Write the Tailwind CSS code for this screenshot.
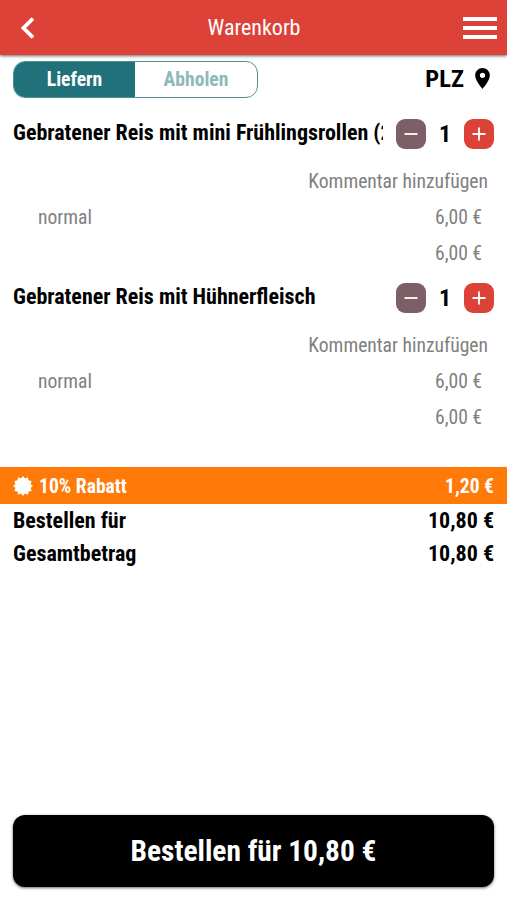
<!DOCTYPE html>
<html lang="de">
<head>
  <meta charset="UTF-8" />
  <meta name="viewport" content="width=device-width, initial-scale=1.0" />
  <title>Warenkorb</title>
  <script src="https://cdn.jsdelivr.net/npm/@tailwindcss/browser@4"></script>
</head>
<body class="bg-white h-screen flex flex-col overflow-hidden text-black font-['Roboto_Condensed',Roboto,sans-serif] font-stretch-condensed">
  <header class="h-[55px] shrink-0 bg-[#dd4239] text-white flex items-center justify-between pl-[21px] pr-[10px] shadow-[0_1px_3px_rgba(0,0,0,0.6)]">
    <button class="w-[24px]" aria-label="Zurück">
      <svg class="w-[14px] h-[22px]" viewBox="0 0 14 22" fill="none" stroke="currentColor" stroke-width="3.8">
        <path d="M12 1.5 2.5 11 12 20.5" />
      </svg>
    </button>
    <h1 class="text-[22px] leading-none">Warenkorb</h1>
    <button aria-label="Menü">
      <svg class="w-[34px] h-[24px]" viewBox="0 0 34 24" fill="currentColor">
        <path d="M0 1h34v4H0zM0 10h34v4H0zM0 19h34v4H0z" />
      </svg>
    </button>
  </header>

  <main class="flex-1 flex flex-col">
    <div class="flex items-center justify-between pt-[6px] pl-[13px] pr-[17px]">
      <div class="flex w-[245px] h-[37px] rounded-[12px] border border-[#4d9196] overflow-hidden text-[19.6px] font-bold">
        <button class="w-[121px] pt-px bg-[#20717a] text-white">Liefern</button>
        <button class="flex-1 pt-px text-[#8fb8bc]">Abholen</button>
      </div>
      <button class="flex items-center gap-[11px] text-[24.5px] font-bold leading-none">
        <span>PLZ</span>
        <svg class="w-[15px] h-[21px] -mt-[2px]" viewBox="5 2 14 20" fill="currentColor">
          <path d="M12 2C8.13 2 5 5.13 5 9c0 5.25 7 13 7 13s7-7.75 7-13c0-3.87-3.13-7-7-7zm0 9.500a2.500 2.500 0 0 1 0-5 2.500 2.500 0 0 1 0 5z" />
        </svg>
      </button>
    </div>

    <ul class="pt-[21px]">
      <li class="pb-[11px]">
        <div class="flex items-center pl-[13px] pr-[12px] h-[30px]">
          <h2 class="w-[370px] mr-[13px] -mt-[3px] text-[22px] font-bold leading-[30px] whitespace-nowrap overflow-hidden">Gebratener Reis mit mini Frühlingsrollen (2</h2>
          <button class="size-[30px] rounded-[9px] bg-[#7d5f67] text-white" aria-label="Weniger">
            <svg class="size-[30px]" viewBox="0 0 30 30" stroke="currentColor" stroke-width="1.8"><path d="M8.500 15h13" /></svg>
          </button>
          <span class="w-[38px] text-center text-[24px] font-bold leading-none">1</span>
          <button class="size-[30px] rounded-[9px] bg-[#dd4239] text-white" aria-label="Mehr">
            <svg class="size-[30px]" viewBox="0 0 30 30" stroke="currentColor" stroke-width="1.8"><path d="M8.500 15h13M15 8.500v13" /></svg>
          </button>
        </div>
        <div class="pt-[15px] pl-[38px] pr-[25px] text-[19.6px] leading-[36px] text-[#808080]">
          <p class="text-right -mr-[6px]">Kommentar hinzufügen</p>
          <p class="flex justify-between"><span>normal</span><span>6,00 €</span></p>
          <p class="text-right">6,00 €</p>
        </div>
      </li>
      <li class="pb-[11px]">
        <div class="flex items-center pl-[13px] pr-[12px] h-[30px]">
          <h2 class="w-[370px] mr-[13px] -mt-[3px] text-[22px] font-bold leading-[30px] whitespace-nowrap overflow-hidden">Gebratener Reis mit Hühnerfleisch</h2>
          <button class="size-[30px] rounded-[9px] bg-[#7d5f67] text-white" aria-label="Weniger">
            <svg class="size-[30px]" viewBox="0 0 30 30" stroke="currentColor" stroke-width="1.8"><path d="M8.500 15h13" /></svg>
          </button>
          <span class="w-[38px] text-center text-[24px] font-bold leading-none">1</span>
          <button class="size-[30px] rounded-[9px] bg-[#dd4239] text-white" aria-label="Mehr">
            <svg class="size-[30px]" viewBox="0 0 30 30" stroke="currentColor" stroke-width="1.8"><path d="M8.500 15h13M15 8.500v13" /></svg>
          </button>
        </div>
        <div class="pt-[15px] pl-[38px] pr-[25px] text-[19.6px] leading-[36px] text-[#808080]">
          <p class="text-right -mr-[6px]">Kommentar hinzufügen</p>
          <p class="flex justify-between"><span>normal</span><span>6,00 €</span></p>
          <p class="text-right">6,00 €</p>
        </div>
      </li>
    </ul>

    <div class="mt-[20px] h-[37px] flex items-center px-[13px] bg-[#ff7a08] text-white text-[19.6px] font-bold">
      <svg class="size-[20px] mr-[6px]" viewBox="-10 -10 20 20" fill="currentColor">
        <circle r="8" />
        <path d="M0-10 2.200-7h-4.400z" />
        <path d="M0-10 2.200-7h-4.400z" transform="rotate(30)" />
        <path d="M0-10 2.200-7h-4.400z" transform="rotate(60)" />
        <path d="M0-10 2.200-7h-4.400z" transform="rotate(90)" />
        <path d="M0-10 2.200-7h-4.400z" transform="rotate(120)" />
        <path d="M0-10 2.200-7h-4.400z" transform="rotate(150)" />
        <path d="M0-10 2.200-7h-4.400z" transform="rotate(180)" />
        <path d="M0-10 2.200-7h-4.400z" transform="rotate(210)" />
        <path d="M0-10 2.200-7h-4.400z" transform="rotate(240)" />
        <path d="M0-10 2.200-7h-4.400z" transform="rotate(270)" />
        <path d="M0-10 2.200-7h-4.400z" transform="rotate(300)" />
        <path d="M0-10 2.200-7h-4.400z" transform="rotate(330)" />
      </svg>
      <span class="pt-[2px]">10% Rabatt</span>
      <span class="ml-auto pt-[2px]">1,20 €</span>
    </div>
    <div class="px-[13px] text-[22px] font-bold leading-[33px]">
      <p class="flex justify-between"><span>Bestellen für</span><span>10,80 €</span></p>
      <p class="flex justify-between"><span>Gesamtbetrag</span><span>10,80 €</span></p>
    </div>
  </main>

  <footer class="px-[13px] pb-[13px]">
    <button class="w-full h-[72px] pt-px rounded-[12px] bg-black text-white text-[29.4px] font-bold shadow-[0_1px_3px_rgba(0,0,0,0.6)]">Bestellen für 10,80 €</button>
  </footer>
</body>
</html>
